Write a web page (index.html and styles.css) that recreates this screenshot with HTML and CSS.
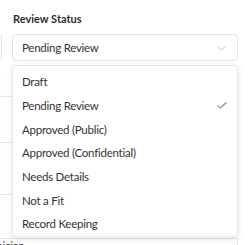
FILE: index.html
```html
<!DOCTYPE html>
<html>
<head>
<meta charset="utf-8">
<link rel="stylesheet" href="styles.css">
</head>
<body>
<div class="page">
  <div class="label">Review Status</div>
  <div class="top-row">
    <div class="stub"></div>
    <div class="select">
      <span class="value">Pending Review</span>
      <svg class="chev" width="9" height="5" viewBox="0 0 9 5"><path d="M0.5 0.5 L4.5 4 L8.5 0.5" fill="none" stroke="#c4bfc1" stroke-width="1"/></svg>
    </div>
  </div>
  <div class="under">
    <div class="row r1"></div>
    <div class="row r2"></div>
    <div class="row r3"></div>
    <div class="row r4"></div>
    <div class="tech"><span>Technician</span></div>
  </div>
  <ul class="menu">
    <li>Draft</li>
    <li class="sel">Pending Review
      <svg class="check" width="10" height="7" viewBox="0 0 10 7"><path d="M0.5 3 L3.2 6 L9.5 0.5" fill="none" stroke="#8c7e87" stroke-width="1.1"/></svg>
    </li>
    <li>Approved (Public)</li>
    <li>Approved (Confidential)</li>
    <li>Needs Details</li>
    <li>Not a Fit</li>
    <li>Record Keeping</li>
  </ul>
</div>
</body>
</html>
```

FILE: styles.css
```css
* { box-sizing: border-box; }
html, body { margin: 0; padding: 0; background: #fff; }
body {
  width: 250px;
  height: 245px;
  overflow: hidden;
  font-family: "Lato", "Noto Sans", sans-serif;
  color: #363134;
}
.page { position: relative; width: 250px; height: 245px; }
.label {
  font-size: 11px;
  font-weight: 700;
  padding: 12px 0 0 13px;
  height: 34px;
  line-height: 14px;
  color: #2f2b2d;
}
.top-row { display: flex; gap: 10px; height: 27px; }
.stub {
  width: 2px;
  height: 27px;
  border: 1px solid #e9e3e5;
  border-left: none;
  border-radius: 0 4px 4px 0;
}
.select {
  width: 226px;
  height: 27px;
  border: 1px solid #e6e0e2;
  border-radius: 4px;
  display: flex;
  align-items: center;
  justify-content: space-between;
  padding: 0 11px 0 9px;
  font-size: 11.5px;
  letter-spacing: -0.25px;
}
.chev { display: block; margin-top: 1px; }
.under { width: 238px; }
.row { border-bottom: 1px solid #ebe6e8; }
.r1 { height: 36px; }
.r2 { height: 46px; }
.r3 { height: 52px; }
.r4 { height: 44px; }
.tech {
  height: 20px;
  border-right: 1px solid #ebe6e8;
  font-size: 11.5px;
  letter-spacing: -0.25px;
  line-height: 14px;
  white-space: nowrap;
}
.tech span { display: inline-block; margin-left: -26px; }
.menu {
  position: absolute;
  left: 12px;
  top: 65px;
  width: 226px;
  height: 172px;
  margin: 0;
  padding: 4px 0 0;
  list-style: none;
  background: #fff;
  border: 1px solid #ebe5e7;
  border-radius: 4px;
  box-shadow: 0 2px 6px rgba(60, 40, 50, 0.12);
  font-size: 11.5px;
  letter-spacing: -0.25px;
}
.menu li {
  height: 23.67px;
  display: flex;
  align-items: center;
  justify-content: space-between;
  padding: 0 10px 0 9px;
}
.check { display: block; }
```
